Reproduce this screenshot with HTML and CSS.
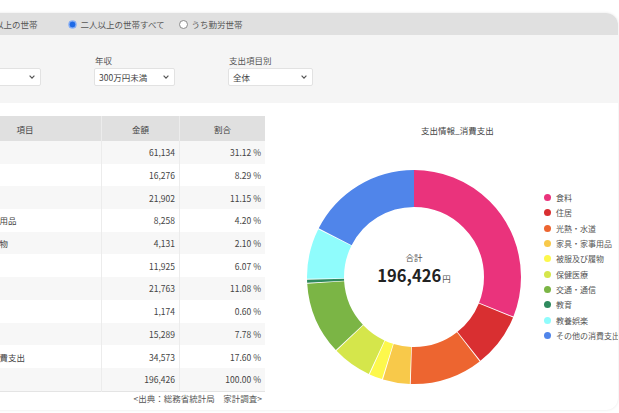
FILE: index.html
```html
<!DOCTYPE html>
<html lang="ja">
<head>
<meta charset="utf-8">
<title>支出情報</title>
<link rel="stylesheet" href="styles.css">
</head>
<body>
<div class="card">
  <div class="tabs">
    <label class="opt opt-1"><span class="radio"></span>二人以上の世帯</label>
    <label class="opt opt-2"><span class="radio checked"></span>二人以上の世帯すべて</label>
    <label class="opt"><span class="radio"></span>うち勤労世帯</label>
  </div>
  <div class="filters">
    <div class="field w81">
      <div class="flabel">地域</div>
      <div class="select"><span>全国</span><svg class="chev" viewBox="0 0 6 4"><path d="M0.6 0.7 L3 3.1 L5.4 0.7" /></svg></div>
    </div>
    <div class="field w81">
      <div class="flabel">年収</div>
      <div class="select"><span>300万円未満</span><svg class="chev" viewBox="0 0 6 4"><path d="M0.6 0.7 L3 3.1 L5.4 0.7" /></svg></div>
    </div>
    <div class="field w85">
      <div class="flabel">支出項目別</div>
      <div class="select"><span>全体</span><svg class="chev" viewBox="0 0 6 4"><path d="M0.6 0.7 L3 3.1 L5.4 0.7" /></svg></div>
    </div>
  </div>
  <div class="content">
    <div class="table-wrap">
      <table class="data">
        <thead>
          <tr><th class="c1">項目</th><th class="c2">金額</th><th class="c3">割合</th></tr>
        </thead>
        <tbody>
          <tr><td>食料</td><td class="num">61,134</td><td class="num">31.12 %</td></tr>
          <tr><td>住居</td><td class="num">16,276</td><td class="num">8.29 %</td></tr>
          <tr><td>光熱・水道</td><td class="num">21,902</td><td class="num">11.15 %</td></tr>
          <tr><td>家具・家事用品</td><td class="num">8,258</td><td class="num">4.20 %</td></tr>
          <tr><td>被服及び履物</td><td class="num">4,131</td><td class="num">2.10 %</td></tr>
          <tr><td>保健医療</td><td class="num">11,925</td><td class="num">6.07 %</td></tr>
          <tr><td>交通・通信</td><td class="num">21,763</td><td class="num">11.08 %</td></tr>
          <tr><td>教育</td><td class="num">1,174</td><td class="num">0.60 %</td></tr>
          <tr><td>教養娯楽</td><td class="num">15,289</td><td class="num">7.78 %</td></tr>
          <tr><td>その他の消費支出</td><td class="num">34,573</td><td class="num">17.60 %</td></tr>
          <tr><td>合計</td><td class="num">196,426</td><td class="num">100.00 %</td></tr>
        </tbody>
      </table>
      <div class="source">&lt;出典：総務省統計局　家計調査&gt;</div>
    </div>
    <div class="chart">
      <div class="chart-title">支出情報_消費支出</div>
      <div class="chart-body">
        <div class="donut">
          <svg class="ring" viewBox="0 0 214 214" width="214" height="214">
            <g transform="rotate(-90 107 107)" fill="none" stroke-width="37">
              <circle cx="107" cy="107" r="88.5" stroke="#ea337c" stroke-dasharray="172.25 700" stroke-dashoffset="0"/>
              <circle cx="107" cy="107" r="88.5" stroke="#d92f31" stroke-dasharray="45.30 700" stroke-dashoffset="-173.05"/>
              <circle cx="107" cy="107" r="88.5" stroke="#ed6530" stroke-dasharray="61.20 700" stroke-dashoffset="-219.15"/>
              <circle cx="107" cy="107" r="88.5" stroke="#f8c94a" stroke-dasharray="22.55 700" stroke-dashoffset="-281.15"/>
              <circle cx="107" cy="107" r="88.5" stroke="#fdf84c" stroke-dasharray="10.88 700" stroke-dashoffset="-304.50"/>
              <circle cx="107" cy="107" r="88.5" stroke="#d5e64b" stroke-dasharray="32.95 700" stroke-dashoffset="-316.18"/>
              <circle cx="107" cy="107" r="88.5" stroke="#7bb545" stroke-dasharray="60.81 700" stroke-dashoffset="-349.93"/>
              <circle cx="107" cy="107" r="88.5" stroke="#2f8a5e" stroke-dasharray="2.54 700" stroke-dashoffset="-411.54"/>
              <circle cx="107" cy="107" r="88.5" stroke="#8ffcfc" stroke-dasharray="42.46 700" stroke-dashoffset="-414.88"/>
              <circle cx="107" cy="107" r="88.5" stroke="#5085ea" stroke-dasharray="97.07 700" stroke-dashoffset="-458.14"/>
            </g>
          </svg>
          <div class="total">
            <div class="total-label">合計</div>
            <div class="total-value">196,426<span class="yen">円</span></div>
          </div>
        </div>
        <ul class="legend">
          <li><span class="dot d1"></span>食料</li>
          <li><span class="dot d2"></span>住居</li>
          <li><span class="dot d3"></span>光熱・水道</li>
          <li><span class="dot d4"></span>家具・家事用品</li>
          <li><span class="dot d5"></span>被服及び履物</li>
          <li><span class="dot d6"></span>保健医療</li>
          <li><span class="dot d7"></span>交通・通信</li>
          <li><span class="dot d8"></span>教育</li>
          <li><span class="dot d9"></span>教養娯楽</li>
          <li><span class="dot d10"></span>その他の消費支出</li>
        </ul>
      </div>
    </div>
  </div>
</div>
</body>
</html>
```
FILE: styles.css
```css
html, body {
  margin: 0;
  padding: 0;
  background: #ffffff;
  overflow: hidden;
  width: 619px;
  height: 413px;
}

body {
  font-family: "Noto Sans CJK JP", "Noto Sans", sans-serif;
  color: #444;
}

.card {
  margin-top: 13px;
  margin-left: -62px;
  width: 680px;
  height: 397px;
  border-radius: 12px;
  overflow: hidden;
  background: #fff;
  box-shadow: 0 0 3px rgba(0, 0, 0, 0.10);
}

/* tabs */
.tabs {
  height: 22px;
  background: #e0e0e0;
  display: flex;
  align-items: center;
  padding-left: 27px;
  font-size: 8.5px;
  line-height: 12px;
  color: #555;
  white-space: nowrap;
}

.opt {
  display: flex;
  align-items: center;
  gap: 4px;
}

.opt-1 { margin-right: 30px; }
.opt-2 { margin-right: 14px; }

.radio {
  width: 9px;
  height: 9px;
  border-radius: 50%;
  box-sizing: border-box;
  border: 1px solid #8a8a8a;
  background: #fff;
}

.radio.checked {
  border: 1px solid #8fb3f4;
  background: radial-gradient(circle, #1e6ae6 0 2.6px, #6d9ff3 3.1px);
}

/* filters */
.filters {
  height: 68px;
  box-sizing: border-box;
  background: #f5f5f5;
  padding: 20px 0 0 22px;
  display: flex;
  gap: 53px;
}

.field.w81 { width: 81px; }
.field.w85 { width: 85px; }

.flabel {
  font-size: 8.5px;
  line-height: 11px;
  color: #555;
  padding-left: 1px;
  margin-bottom: 2px;
}

.select {
  height: 18px;
  box-sizing: border-box;
  background: #fff;
  border: 1px solid #e2e2e2;
  border-radius: 2px;
  display: flex;
  align-items: center;
  justify-content: space-between;
  padding: 0 5px 0 4px;
  font-size: 8.5px;
  color: #444;
}

.chev {
  width: 6px;
  height: 4px;
}

.chev path {
  fill: none;
  stroke: #555;
  stroke-width: 1.2;
}

/* content */
.content {
  display: flex;
  margin-top: 13px;
}

.table-wrap {
  margin-left: 11px;
  width: 314px;
}

.data {
  border-collapse: collapse;
  width: 314px;
  table-layout: fixed;
  font-size: 8.5px;
  color: #444;
  border-bottom: 1px solid #e4e4e4;
}

.data th {
  background: #e0e0e0;
  height: 25px;
  font-weight: normal;
  text-align: center;
  padding: 0;
  border-left: 1px solid #ececec;
}

.data th:first-child { border-left: none; }

.c1 { width: 152px; }
.c2 { width: 77px; }
.c3 { width: 85px; }

.data td {
  height: 22.7px;
  padding: 0 4px 0 8px;
  border-left: 1px solid #ececec;
  white-space: nowrap;
}

.data td:first-child { border-left: none; }

.data tbody tr:nth-child(odd) td { background: #f7f7f7; }

.data td.num { text-align: right; }

.source {
  text-align: right;
  font-size: 8.5px;
  line-height: 12px;
  color: #555;
  padding-right: 1px;
}

/* chart */
.chart {
  margin-left: 44px;
  padding-top: 8px;
}

.chart-title {
  font-size: 8.5px;
  line-height: 12px;
  color: #444;
  padding-left: 114px;
  white-space: nowrap;
}

.chart-body {
  display: flex;
  margin-top: 34px;
}

.donut {
  display: grid;
  width: 214px;
  height: 214px;
}

.ring, .total {
  grid-area: 1 / 1;
}

.total {
  align-self: center;
  justify-self: center;
  text-align: center;
  padding-bottom: 14px;
}

.total-label {
  font-size: 8.5px;
  line-height: 12px;
  color: #555;
}

.total-value {
  font-size: 16.5px;
  line-height: 24px;
  font-weight: bold;
  color: #222;
}

.yen {
  font-size: 8.5px;
  font-weight: normal;
  color: #555;
  margin-left: 1px;
}

.legend {
  list-style: none;
  margin: 20px 0 0 23px;
  padding: 0;
  font-size: 8px;
  color: #555;
  white-space: nowrap;
}

.legend li {
  height: 15.3px;
  display: flex;
  align-items: center;
  gap: 5px;
}

.dot {
  width: 7px;
  height: 7px;
  border-radius: 50%;
  flex: none;
}

.d1 { background: #ea337c; }
.d2 { background: #d92f31; }
.d3 { background: #ed6530; }
.d4 { background: #f8c94a; }
.d5 { background: #fdf84c; }
.d6 { background: #d5e64b; }
.d7 { background: #7bb545; }
.d8 { background: #2f8a5e; }
.d9 { background: #8ffcfc; }
.d10 { background: #5085ea; }
```
